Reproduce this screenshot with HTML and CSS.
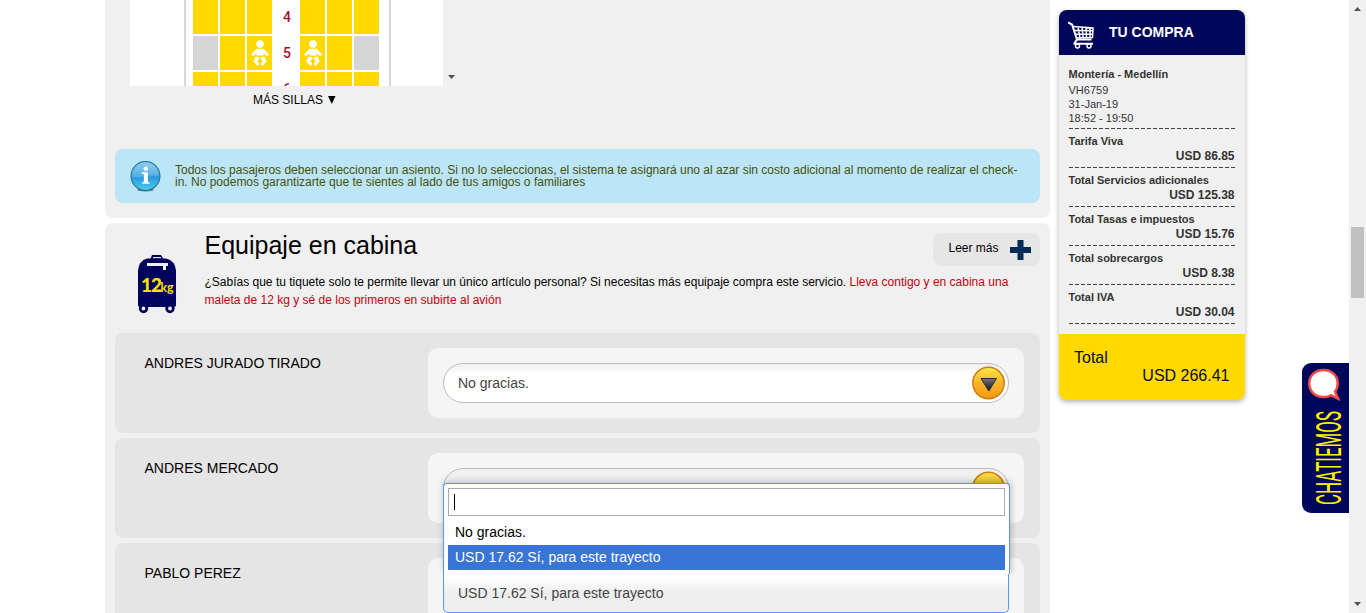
FILE: index.html
```html
<!DOCTYPE html>
<html lang="es">
<head>
<meta charset="utf-8">
<title>Servicios adicionales</title>
<link rel="stylesheet" href="styles.css">
</head>
<body>
<svg width="0" height="0" class="defs" aria-hidden="true">
  <defs>
    <symbol id="baby" viewBox="0 0 18 26">
      <circle cx="9" cy="4" r="3.800"/>
      <path d="M5.500 8.800h7l5.500 5.400-1.800 2-3.700-2.600v2H5.500v-2l-3.700 2.600-1.800-2z"/>
      <path d="M4.500 16.500 8.500 17.500 8 19.500 6.300 20.800 8.400 24 6.500 26 2.300 21.200z"/>
      <path d="M13.500 16.500 9.500 17.500 10 19.500 11.700 20.800 9.600 24 11.500 26 15.700 21.200z"/>
    </symbol>
    <linearGradient id="gold" x1="0" y1="0" x2="0" y2="1"><stop offset="0" stop-color="#f9e94a"/><stop offset=".55" stop-color="#f9b126"/><stop offset="1" stop-color="#f39b12"/></linearGradient>
    <linearGradient id="dark" x1="0" y1="0" x2="0" y2="1"><stop offset="0" stop-color="#77777b"/><stop offset="1" stop-color="#080f16"/></linearGradient>
    <symbol id="arrow" viewBox="0 0 34 34">
      <circle cx="17.500" cy="17" r="15.700" fill="url(#gold)" stroke="#d67c12" stroke-width="1.500"/>
      <path d="M10 12.500h15.500l-7.700 12.500z" fill="url(#dark)" stroke="#25292c"/>
    </symbol>
    <linearGradient id="sky" x1="0" y1="0" x2="0" y2="1"><stop offset="0" stop-color="#7ac3ef"/><stop offset=".55" stop-color="#2b9be0"/><stop offset="1" stop-color="#4bcdf2"/></linearGradient>
  </defs>
</svg>
<div class="window">
  <div class="page">
    <main class="main">
      <section class="card seats">
        <div class="seat-frame">
          <div class="fuselage">
            <div class="seat-row"><i></i><i></i><i></i><b>4</b><i></i><i></i><i></i></div>
            <div class="seat-row"><i class="taken"></i><i></i><i><svg><use href="#baby"/></svg></i><b>5</b><i><svg><use href="#baby"/></svg></i><i></i><i class="taken"></i></div>
            <div class="seat-row"><i></i><i></i><i></i><b>6</b><i></i><i></i><i></i></div>
          </div>
          <svg class="frame-arrow" viewBox="0 0 7 4"><path d="M0 0h7L3.500 4z"/></svg>
        </div>
        <div class="more-seats">MÁS SILLAS <svg viewBox="0 0 8 8"><path d="M0 0h7.500L3.750 8z"/></svg></div>
        <div class="info">
          <svg class="info-icon" viewBox="0 0 30 30">
            <ellipse cx="15" cy="28" rx="8" ry="1.500" fill="#667b84"/>
            <circle cx="15" cy="14.500" r="14" fill="url(#sky)" stroke="#20728e"/>
            <path d="M2 14.500a13 13 0 0 1 26 0c-8-2-17 2-26 1z" fill="#fff" opacity=".18"/>
            <circle cx="15.300" cy="7.500" r="2.200" fill="#fff"/>
            <path d="M11.500 11h5.800v9.500h1.700V22h-7.400v-1.500h1.800v-8h-1.900z" fill="#fff"/>
          </svg>
          <p>Todos los pasajeros deben seleccionar un asiento. Si no lo seleccionas, el sistema te asignará uno al azar sin costo adicional al momento de realizar el check-<br>in. No podemos garantizarte que te sientes al lado de tus amigos o familiares</p>
        </div>
      </section>

      <section class="card baggage">
        <header class="bag-head">
          <svg class="bag-icon" viewBox="0 0 40 60">
            <path d="M13 5l2-5h9l3 5z" fill="#00035c"/><path d="M16 2.700h8" stroke="#f0f0f0" stroke-width="1.300"/>
            <path d="M10 3.500h19q9 2 10 12V50q0 2-3 2H4q-3 0-3-2V15.500q1-10 9-12z" fill="#00035c"/>
            <path d="M10 8h21v3h-2v4h-3v-4H10z" fill="#f0f0f0"/>
            <circle cx="6.500" cy="53.500" r="3.300" fill="#f0f0f0" stroke="#00035c" stroke-width="2.800"/>
            <circle cx="33" cy="53.500" r="3.300" fill="#f0f0f0" stroke="#00035c" stroke-width="2.800"/>
            <text x="4" y="37" class="bag-num">12</text>
            <text x="23.500" y="37" class="bag-kg" textLength="13" lengthAdjust="spacingAndGlyphs">kg</text>
          </svg>
          <div class="bag-copy">
            <div class="title-line">
              <h1>Equipaje en cabina</h1>
              <a class="read-more"><span>Leer más</span><svg viewBox="0 0 21 20"><path d="M7.500 0h6v7H21v6h-7.500v7h-6v-7H0V7h7.500z"/></svg></a>
            </div>
            <p>¿Sabías que tu tiquete solo te permite llevar un único artículo personal? Si necesitas más equipaje compra este servicio. <em>Lleva contigo y en cabina una<br>maleta de 12 kg y sé de los primeros en subirte al avión</em></p>
          </div>
        </header>
        <div class="passengers">
          <div class="passenger"><span class="name">ANDRES JURADO TIRADO</span>
            <div class="choice"><div class="select">No gracias.<svg><use href="#arrow"/></svg></div></div></div>
          <div class="passenger"><span class="name">ANDRES MERCADO</span>
            <div class="choice"><div class="select pressed"><svg><use href="#arrow"/></svg></div>
              <div class="menu">
                <div class="search"><span class="caret"></span></div>
                <div class="option">No gracias.</div>
                <div class="option active">USD 17.62 Sí, para este trayecto</div>
              </div></div></div>
          <div class="passenger"><span class="name">PABLO PEREZ</span>
            <div class="choice open"><div class="select">USD 17.62 Sí, para este trayecto</div></div></div>
        </div>
      </section>
    </main>

    <aside class="cart">
      <div class="cart-head">
        <svg viewBox="0 0 27 28" fill="none" stroke="#fff" stroke-width="1.500">
          <path d="M0 1.500 4 3.500 9 18.500h14.500" stroke-width="2"/>
          <path d="M5 5.500l20 1.500-.5 9.500L8.500 17M6 9.500l18.500.3M7.300 13.300h17M10 6l2 11M14 6l1.200 11M18 6.300l.5 10.700M22 6.500V17"/>
          <path d="M9 18.500 6.500 22v.8H25" stroke-width="2"/>
          <circle cx="9.500" cy="25" r="2"/><circle cx="21" cy="25" r="2"/>
        </svg><span>TU COMPRA</span>
      </div>
      <div class="cart-body">
        <div class="flight"><b>Montería - Medellín</b><span>VH6759</span><span>31-Jan-19</span><span>18:52 - 19:50</span></div>
        <div class="item"><span>Tarifa Viva</span><strong>USD 86.85</strong></div>
        <div class="item"><span>Total Servicios adicionales</span><strong>USD 125.38</strong></div>
        <div class="item"><span>Total Tasas e impuestos</span><strong>USD 15.76</strong></div>
        <div class="item"><span>Total sobrecargos</span><strong>USD 8.38</strong></div>
        <div class="item"><span>Total IVA</span><strong>USD 30.04</strong></div>
      </div>
      <div class="cart-total"><span>Total</span><span class="sum">USD 266.41</span></div>
    </aside>
    <div class="chat">
      <svg viewBox="0 0 47 150">
        <path d="M21.500 7C13 7 7.200 13 7.200 20.500S13 34 21.500 34c3 0 5.500-.6 7.500-1.800l7 3.500-3-7.200c2-2.300 2.700-5 2.700-8C35.700 13 30 7 21.500 7z" fill="#fff" stroke="#f64949" stroke-width="2.500"/>
        <text transform="translate(39 142) rotate(-90)" textLength="94" lengthAdjust="spacingAndGlyphs">CHATIEMOS</text>
      </svg>
    </div>
  </div>
  <div class="scrollbar">
    <svg viewBox="0 0 7 4"><path d="M0 4h7L3.500 0z"/></svg>
    <div class="thumb"></div>
    <svg viewBox="0 0 7 4"><path d="M0 0h7L3.500 4z"/></svg>
  </div>
</div>
</body>
</html>
```

FILE: styles.css
```css
* { box-sizing: border-box; }
body { margin: 0; font: 12px/18px "Liberation Sans", Arial, sans-serif; color: #000; background: #fff; overflow: hidden; }
p, h1 { margin: 0; font-weight: normal; }
i, em { font-style: normal; }
svg { display: block; flex: none; }
.defs { position: absolute; }
.window { display: flex; height: 613px; overflow: hidden; }
.page { position: relative; display: flex; align-items: flex-start; gap: 9px; width: 1349px; height: 613px; padding-left: 105px; overflow: hidden; }
.main { width: 945px; flex: none; display: flex; flex-direction: column; gap: 5px; }
.card { background: #f0f0f0; border-radius: 8px; }

/* seat map */
.seats { height: 218px; padding: 0 10px; border-radius: 0 0 8px 8px; }
.seat-frame { display: flex; align-items: flex-end; gap: 4px; height: 86px; margin-left: 15px; }
.fuselage { width: 313px; height: 86px; padding-left: 54px; background: #fff; overflow: hidden; }
.seat-row { display: grid; grid-template-columns: 25px 25px 25px 24px 25px 25px 25px; grid-template-rows: 34px; column-gap: 2px; width: 207px; height: 36px; padding: 0 7px; border: solid #d8d8d8; border-width: 0 2px; }
.seat-row i { background: #ffd900; display: flex; align-items: center; justify-content: center; }
.seat-row i.taken { background: #d5d5d5; }
.seat-row svg { width: 18px; height: 26px; fill: #fff; }
.seat-row b { color: #a80f35; font-size: 14px; line-height: 35px; text-align: center; padding-left: 2px; font-family: Roboto, "Liberation Sans", sans-serif; font-weight: 500; }
.frame-arrow { width: 7px; height: 4px; margin: 0 0 7px 1px; fill: #505050; }
.more-seats { display: flex; align-items: center; gap: 5px; height: 18px; margin: 5px 0 0 138px; }
.more-seats svg { width: 8px; height: 8px; }
.info { display: flex; align-items: center; gap: 14px; height: 54px; margin-top: 40px; padding-left: 15px; background: #bce5f7; border-radius: 8px; color: #45510d; }
.info-icon { width: 31px; height: 31px; margin-top: 1px; }
.info p { line-height: 12px; white-space: nowrap; margin-top: -1px; }

/* baggage */
.baggage { padding: 10px 10px 0; }
.bag-head { display: flex; height: 100px; }
.bag-icon { width: 40px; height: 60px; margin: 22px 27px 0 22px; }
.bag-num, .bag-kg { fill: #ffe000; font: 900 19px Lato, sans-serif; letter-spacing: -1px; }
.bag-kg { font-size: 13px; font-weight: bold; letter-spacing: 0; }
.bag-copy { width: 836px; white-space: nowrap; }
.title-line { display: flex; justify-content: space-between; height: 33px; }
.title-line h1 { font-size: 25px; line-height: 25px; padding-left: .5px; }
.read-more { display: flex; align-items: center; gap: 11px; width: 107px; height: 33px; padding-left: 15.5px; background: #e6e6e6; border-radius: 8px; }
.read-more span { margin-top: -3px; }
.read-more svg { width: 21px; height: 20px; fill: #002c55; }
.bag-copy p { padding: 7px 0 0 .5px; }
.bag-copy em { color: #c7000e; }
.passengers { display: flex; flex-direction: column; gap: 5px; font-size: 14px; }
.passenger { display: flex; justify-content: space-between; height: 100px; padding: 15px 16px 15px 29.5px; background: #e5e5e5; border-radius: 8px; }
.name { line-height: 30px; }
.choice { position: relative; width: 596px; height: 70px; padding: 15px; background: #f5f5f5; border-radius: 10px; }
.select { display: flex; align-items: center; justify-content: space-between; height: 40px; padding: 0 3px 0 14px; border: 1px solid #bdbdbd; border-radius: 20px; background: linear-gradient(#eee, #fff 25%); color: #444; }
.select.pressed { background: linear-gradient(#eee, #f8f8f8 25%); }
.select svg { width: 34px; height: 34px; margin-left: auto; }
.menu { position: absolute; z-index: 2; left: 15px; top: 30px; width: 567px; height: 91px; padding: 4px; border: 1px solid #5897fb; border-bottom: 0; border-radius: 4px 4px 0 0; background: #fff; box-shadow: 0 -4px 7px rgba(0,0,0,.15), 2px 0 5px rgba(0,0,0,.1); clip-path: inset(-12px -12px 0 -12px); }
.search { height: 28px; border: 1px solid #aaa; margin-bottom: 4px; padding: 5px; }
.caret { display: block; width: 1px; height: 16px; background: #000; }
.option { height: 25px; padding: 0 7px; line-height: 25px; }
.option.active { background: #3875d7; color: #fff; }
.open .select { border-color: #5897fb; border-top: 0; border-radius: 0 0 5px 5px; background: linear-gradient(#fff 15%, #eee 50%); }

/* purchase summary */
.cart { width: 186px; margin-top: 10px; background: #f0f0f0; border-radius: 8px; overflow: hidden; box-shadow: 0 2px 5px rgba(0,0,0,.3); color: #333; }
.cart-head { display: flex; align-items: center; height: 45px; padding-left: 9px; gap: 14px; background: #000659; color: #fff; font: bold 14px/20px "Liberation Sans", Arial, sans-serif; }
.cart-head svg { width: 27px; height: 28px; margin-top: 4px; }
.cart-head span { margin-top: -1px; }
.cart-body { height: 279px; padding: 11px 9px 0; font-size: 11px; }
.flight, .item { display: flex; flex-direction: column; background: repeating-linear-gradient(90deg, #444 0 4px, transparent 4px 6px) left 1px bottom / 166px 1px no-repeat; }
.flight { height: 63px; line-height: 14px; padding-left: .5px; }
.flight b { line-height: 16px; margin-bottom: 1px; }
.item { height: 39px; padding-top: 5px; line-height: 15px; padding-left: .5px; }
.item span { font-weight: bold; }
.item strong { align-self: flex-end; font-size: 12px; line-height: 14px; padding-right: 1.5px; }
.cart-total { display: flex; flex-direction: column; height: 66px; padding: 15px 15.5px 0 15px; background: #ffd900; color: #0b0b23; font-size: 16px; line-height: 18px; }
.sum { align-self: flex-end; }
.chat { position: absolute; right: 0; top: 363px; width: 47px; height: 150px; background: #000659; border-radius: 9px 0 0 9px; }
.chat svg { width: 47px; height: 150px; }
.chat text { fill: #fff200; font: 400 35px Roboto, sans-serif; }
.scrollbar { display: flex; flex-direction: column; align-items: center; width: 17px; background: #f0f0f0; padding: 7px 0; }
.scrollbar svg { width: 7px; height: 4px; fill: #505050; }
.thumb { width: 13px; height: 71px; margin: 216px 0 auto; background: #c1c1c1; }
```
